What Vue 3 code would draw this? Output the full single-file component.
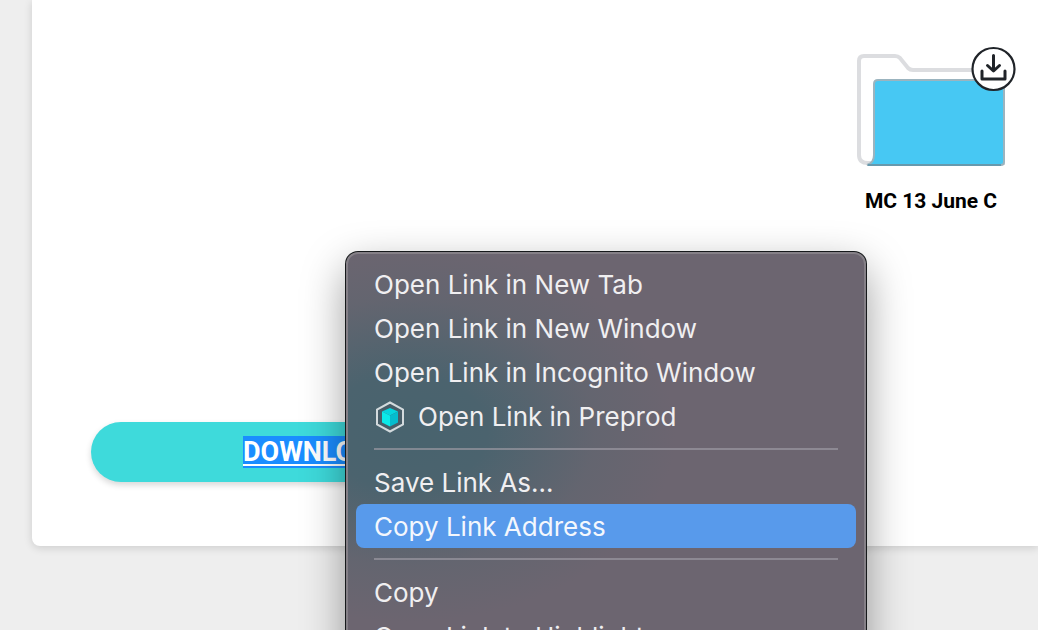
<script setup>
const groups = [
  [
    { label: 'Open Link in New Tab' },
    { label: 'Open Link in New Window' },
    { label: 'Open Link in Incognito Window' },
    { label: 'Open Link in Preprod', icon: true }
  ],
  [{ label: 'Save Link As…' }, { label: 'Copy Link Address', active: true }],
  [{ label: 'Copy' }, { label: 'Copy Link to Highlight' }]
]
</script>

<template>
  <main class="page">
    <section class="card">
      <figure class="folder">
        <div class="folder-art">
          <svg class="folder-icon" viewBox="0 0 150 114" aria-hidden="true">
            <path d="M3 8Q3 3 8 3H39Q42 3 44 5L52 15Q54 17 57 17H142Q147 17 147 22V110H12Q3 110 3 102Z" fill="#fff" stroke="#dcdde0" stroke-width="4" />
            <path d="M22 27H144Q148 27 148 31V109Q148 112 145 112H11Q18 110 18 102V31Q18 27 22 27Z" fill="#47c8f3" stroke="#9bb4bf" stroke-width="2" />
            <path d="M12 112H145" stroke="#6799ad" stroke-width="2" />
          </svg>
          <button class="save" type="button" aria-label="Download folder">
            <svg viewBox="0 0 46 46" fill="none" stroke="#202429" aria-hidden="true">
              <circle cx="22.500" cy="23" r="21" fill="#fff" stroke-width="2.200" />
              <path d="M22.500 9.500V24.500M16.500 19.500L22.500 25L28.500 19.500" stroke-width="3" stroke-linecap="round" stroke-linejoin="round" />
              <path d="M11 25V33H34V25" stroke-width="3" stroke-linecap="round" stroke-linejoin="round" />
            </svg>
          </button>
        </div>
        <figcaption>MC 13 June C</figcaption>
      </figure>
      <a class="download" href="#"><span>DOWNLOAD</span></a>
    </section>

    <nav class="menu" aria-label="Link options">
      <ul v-for="(group, i) in groups" :key="i">
        <li v-for="item in group" :key="item.label">
          <button type="button" :class="{ active: item.active }">
            <svg v-if="item.icon" class="cube" viewBox="0 0 32 32" aria-hidden="true">
              <path d="M16 1.500L29 8.500V23.500L16 30.500L3 23.500V8.500Z" fill="#475d68" stroke="#d3dadd" stroke-width="2" />
              <path d="M16 7L24 10.500L16 14.500L8 10.500Z" fill="#05d5de" />
              <path d="M8 10.500L16 14.500V25.500L8 21.500Z" fill="#0be9e8" />
              <path d="M24 10.500L16 14.500V25.500L24 21.500Z" fill="#05bccd" />
            </svg>
            {{ item.label }}
          </button>
        </li>
      </ul>
    </nav>
  </main>
</template>

<style>
body {
  margin: 0;
}
</style>

<style scoped>
.page {
  position: relative;
  height: 100vh;
  overflow: hidden;
  background: #eee;
}

.card {
  display: flex;
  flex-direction: column;
  margin-left: 32px;
  padding: 53px 32px 64px 59px;
  border-bottom-left-radius: 8px;
  background: #fff;
  box-shadow: 0 2px 8px rgba(0, 0, 0, 0.14);
}

.folder {
  align-self: flex-end;
  width: 150px;
  margin: 0 0 206px;
}

.folder-art {
  position: relative;
}

.folder-icon {
  display: block;
  width: 100%;
}

.save {
  position: absolute;
  top: -7px;
  right: -11px;
  width: 46px;
  height: 46px;
  padding: 0;
  border: 0;
  border-radius: 50%;
  background: none;
}

.save svg {
  display: block;
}

figcaption {
  margin-top: 20px;
  font: bold 21px/29px Roboto, sans-serif;
  text-align: center;
  white-space: nowrap;
  color: #000;
}

.download {
  align-self: flex-start;
  display: flex;
  align-items: center;
  height: 60px;
  padding: 0 152px;
  border-radius: 30px;
  background: #3edadb;
  box-shadow: 0 3px 6px rgba(0, 0, 0, 0.16);
  color: #fff;
  font: bold 27px/32px Roboto, sans-serif;
  text-decoration: underline;
  text-decoration-thickness: 2px;
  text-underline-offset: 3px;
}

.download span {
  background: #1a8dff;
}

.menu {
  position: absolute;
  top: 252px;
  left: 346px;
  box-sizing: border-box;
  width: 520px;
  padding: 8px;
  border: 2px solid #858087;
  border-radius: 12px;
  background:
    radial-gradient(ellipse 270px 190px at 60px 180px, #48636e 0%, #4b636e 30%, rgba(94, 101, 111, 0.6) 70%, transparent 100%),
    #6c6570;
  background-origin: border-box;
  box-shadow: 0 0 0 1px #16191b, 0 16px 44px rgba(0, 0, 0, 0.4);
}

ul {
  margin: 0;
  padding: 0;
  list-style: none;
}

ul + ul::before {
  content: '';
  display: block;
  height: 2px;
  margin: 10px 18px;
  background: rgba(160, 157, 166, 0.65);
}

.menu button {
  display: flex;
  align-items: center;
  gap: 12px;
  width: 100%;
  height: 44px;
  padding: 2px 18px 0;
  border: 0;
  border-radius: 8px;
  background: none;
  color: #f0eff1;
  font: 26px/32px Inter, sans-serif;
  text-align: left;
  white-space: nowrap;
}

.menu .active {
  background: #589aeb;
  color: #f4f7fd;
}

.cube {
  flex: none;
  width: 32px;
  height: 32px;
}
</style>
